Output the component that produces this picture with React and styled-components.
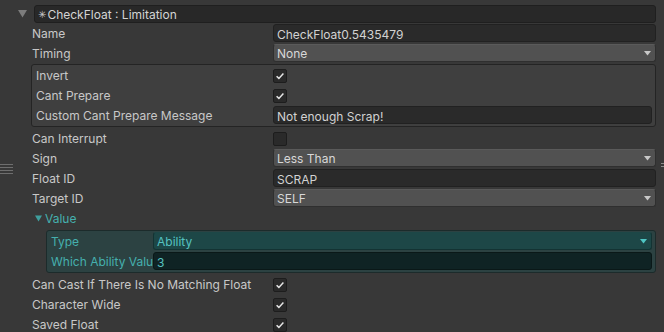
import React from "react";
import styled, { createGlobalStyle } from "styled-components";

const Global = createGlobalStyle`
  html, body { margin: 0; padding: 0; background: #383838; }
  body { font-family: Inter, "Noto Sans", sans-serif; font-size: 12px; color: #c4c4c4; }
  * { box-sizing: border-box; }
`;

const Page = styled.div`
  position: relative;
  width: 664px;
  height: 332px;
  overflow: hidden;
  background: #383838;
  padding-top: 4px;
  display: flex;
  flex-direction: column;
  & > * { flex-shrink: 0; }
`;

const HeaderRow = styled.div`
  display: flex;
  align-items: center;
  height: 19px;
  padding-left: 18px;
  padding-right: 8px;
`;

const Fold = styled.svg`
  flex: none;
  width: 9px;
  height: 8px;
  margin-right: ${(p) => p.$gap || 7}px;
`;

const HeaderBox = styled.div`
  flex: 1;
  height: 18px;
  background: #282828;
  border: 1px solid #1f1f1f;
  border-radius: 3px;
  display: flex;
  align-items: center;
  padding: 1px 0 0 3px;
  color: #d4d4d4;
  font-size: 12px;
`;

const Star = styled.span`
  font-family: "DejaVu Sans", sans-serif;
  font-size: 10px;
  color: #c8c8c8;
  margin-right: 1px;
`;

const Row = styled.div`
  display: grid;
  grid-template-columns: ${(p) => p.$label}px 1fr;
  align-items: center;
  height: 20px;
  padding-left: ${(p) => p.$left}px;
  padding-right: ${(p) => p.$right}px;
`;

const Label = styled.div`
  color: ${(p) => (p.$teal ? "#45b0ae" : "#c8c8c8")};
  white-space: nowrap;
  overflow: hidden;
  line-height: 18px;
  padding-top: 2px;
`;

const TextField = styled.div`
  height: 18px;
  background: ${(p) => (p.$teal ? "#0f2324" : "#2a2a2a")};
  border: 1px solid ${(p) => (p.$teal ? "#0a1818" : "#212121")};
  border-radius: 3px;
  padding: 2px 0 0 3px;
  color: ${(p) => (p.$teal ? "#55c2c0" : "#d2d2d2")};
  display: flex;
  align-items: center;
  white-space: nowrap;
`;

const Dropdown = styled.div`
  height: 18px;
  background: ${(p) => (p.$teal ? "#1d4747" : "#515151")};
  border: 1px solid ${(p) => (p.$teal ? "#133333" : "#2f2f2f")};
  border-top-color: ${(p) => (p.$teal ? "#1d4747" : "#5a5a5a")};
  border-radius: 3px;
  padding: 0 4px 0 3px;
  color: ${(p) => (p.$teal ? "#55c2c0" : "#d8d8d8")};
  display: flex;
  align-items: center;
  justify-content: space-between;
  & > span { padding-top: 1px; }
`;

const Arrow = styled.svg`
  width: 7px;
  height: 5px;
  flex: none;
`;

const Check = styled.div`
  width: 14px;
  height: 14px;
  margin-top: 1px;
  background: #2a2a2a;
  border: 1px solid #1d1d1d;
  border-radius: 2px;
  display: flex;
  align-items: center;
  justify-content: center;
`;

const Group = styled.div`
  margin: 1px 8px 1px 31px;
  background: #3f3f3f;
  border: 1px solid #242424;
  border-radius: 3px;
  padding-bottom: 1px;
`;

const TealGroup = styled.div`
  margin: 2px 8px 1px 46px;
  background: #2c4242;
  border: 1px solid #1c2b2b;
  border-radius: 3px;
  padding: 0 0 1px;
`;

const FoldRow = styled.div`
  display: flex;
  align-items: center;
  height: 20px;
  padding-left: 34px;
  padding-top: 1px;
  color: #45b0ae;
`;

const Handle = styled.div`
  position: absolute;
  left: 0;
  top: 164px;
  width: 13px;
  display: flex;
  flex-direction: column;
  gap: 2px;
  & > span { display: block; height: 1px; background: #6e6e6e; }
`;

const EdgeMark = styled.div`
  position: absolute;
  left: 661px;
  top: 163px;
  width: 3px;
  display: flex;
  flex-direction: column;
  gap: 2px;
  & > span { display: block; height: 1px; background: #8a8a8a; }
`;

const ArrowIcon = ({ teal }) => (
  <Arrow viewBox="0 0 7 5">
    <path d="M0 0 H7 L3.5 4.5 Z" fill={teal ? "#4fc6c4" : "#c8c8c8"} />
  </Arrow>
);

const CheckBox = ({ on }) => (
  <Check>
    {on && (
      <svg width="10" height="10" viewBox="0 0 10 10">
        <path d="M1.6 5.2 L3.9 7.4 L8.4 2.6" stroke="#e6e6e6" strokeWidth="1.5" fill="none" />
      </svg>
    )}
  </Check>
);

const Field = ({ kind, value, teal }) => {
  if (kind === "text") return <TextField $teal={teal}>{value}</TextField>;
  if (kind === "drop")
    return (
      <Dropdown $teal={teal}>
        <span>{value}</span>
        <ArrowIcon teal={teal} />
      </Dropdown>
    );
  return <CheckBox on={value} />;
};

const Prop = ({ label, kind, value, labelW = 241, left = 32, right = 8, teal }) => (
  <Row $label={labelW} $left={left} $right={right}>
    <Label $teal={teal}>{label}</Label>
    <Field kind={kind} value={value} teal={teal} />
  </Row>
);

export default function App() {
  return (
    <Page>
      <Global />
      <HeaderRow>
        <Fold viewBox="0 0 9 8">
          <path d="M0 0 H9 L4.5 7.5 Z" fill="#7c7c7c" />
        </Fold>
        <HeaderBox>
          <Star>✳</Star>CheckFloat : Limitation
        </HeaderBox>
      </HeaderRow>
      <Prop label="Name" kind="text" value="CheckFloat0.5435479" />
      <Prop label="Timing" kind="drop" value="None" />
      <Group>
        <Prop label="Invert" kind="check" value={true} labelW={237} left={4} right={3} />
        <Prop label="Cant Prepare" kind="check" value={true} labelW={237} left={4} right={3} />
        <Prop label="Custom Cant Prepare Message" kind="text" value="Not enough Scrap!" labelW={237} left={4} right={3} />
      </Group>
      <Prop label="Can Interrupt" kind="check" value={false} />
      <Prop label="Sign" kind="drop" value="Less Than" />
      <Prop label="Float ID" kind="text" value="SCRAP" />
      <Prop label="Target ID" kind="drop" value="SELF" />
      <FoldRow>
        <Fold viewBox="0 0 9 8" $gap={2}>
          <path d="M1 0.5 H8 L4.5 6.5 Z" fill="#3f9f9d" />
        </Fold>
        Value
      </FoldRow>
      <TealGroup>
        <Prop label="Type" kind="drop" value="Ability" labelW={102} left={4} right={3} teal />
        <Prop label="Which Ability Value" kind="text" value="3" labelW={102} left={4} right={3} teal />
      </TealGroup>
      <Prop label="Can Cast If There Is No Matching Float" kind="check" value={true} />
      <Prop label="Character Wide" kind="check" value={true} />
      <Prop label="Saved Float" kind="check" value={true} />
      <Handle>
        <span /><span /><span /><span />
      </Handle>
      <EdgeMark>
        <span /><span />
      </EdgeMark>
    </Page>
  );
}
